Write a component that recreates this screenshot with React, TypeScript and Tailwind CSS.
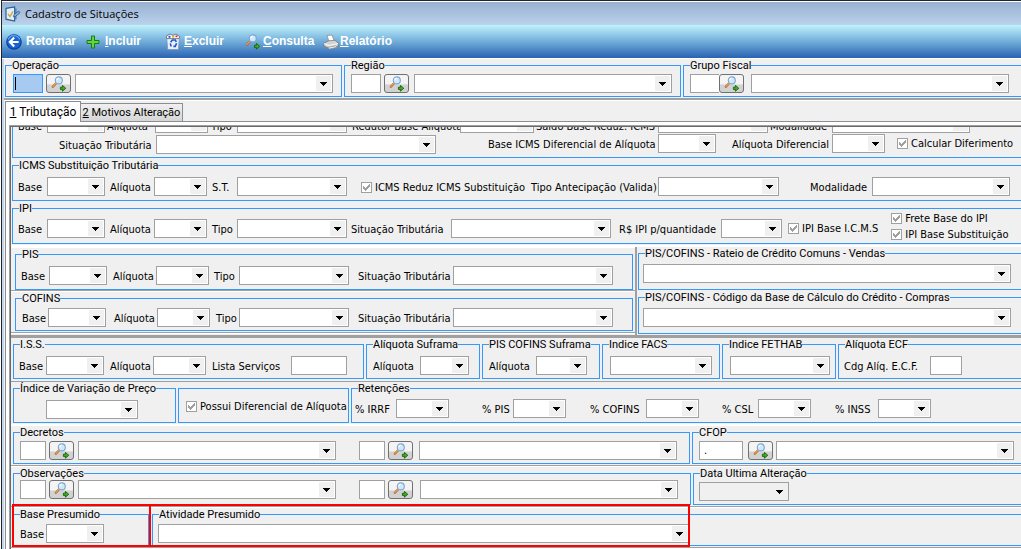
import React, { useId, useState } from 'react';

interface GroupProps {
  title?: string;
  className?: string;
  bodyClass?: string;
  children: React.ReactNode;
}

// Caixa com borda azul e título na linha superior
const Group: React.FC<GroupProps> = ({ title, className = '', bodyClass = '', children }) => (
  <fieldset className={`min-w-0 border border-[#3399ff] ${title ? '' : 'mt-[6px]'} ${className}`}>
    {title && (
      <legend className="ml-[6px] h-[13px] whitespace-nowrap font-['Roboto',sans-serif] text-[11px] leading-[13px]">
        {title}
      </legend>
    )}
    <div className={`flex items-start ${bodyClass}`}>{children}</div>
  </fieldset>
);

interface FieldProps {
  label?: string;
  name?: string;
  labelClass?: string;
  className?: string;
  boxClass?: string;
  flat?: boolean;
  value?: string;
}

const Combo: React.FC<FieldProps> = ({ label, name, labelClass = '', className = '', boxClass = '', flat }) => {
  const id = useId();
  return (
    <div className={`flex shrink-0 items-center ${className}`}>
      {label && <label htmlFor={id} className={`shrink-0 whitespace-nowrap pt-[2px] ${labelClass}`}>{label}</label>}
      <div className={`relative h-[19px] shrink-0 border border-[#a0a0a0] ${flat ? 'bg-[#f0f0f0]' : 'bg-white'} ${boxClass}`}>
        <select id={id} aria-label={label ? undefined : name} className="block h-full w-full appearance-none bg-transparent px-1 outline-none">
          <option value=""></option>
        </select>
        <span className="pointer-events-none absolute inset-y-px right-px flex w-[15px] items-center justify-center bg-[#f0f0f0]">
          <svg width="7" height="4" viewBox="0 0 7 4" shapeRendering="crispEdges">
            <path d="M0 0h7v1H0zM1 1h5v1H1zM2 2h3v1H2zM3 3h1v1H3z" fill="#000" />
          </svg>
        </span>
      </div>
    </div>
  );
};

const TextField: React.FC<FieldProps> = ({ label, name, labelClass = '', className = '', boxClass = '', value = '' }) => {
  const id = useId();
  const [text, setText] = useState(value);
  return (
    <div className={`flex shrink-0 items-center ${className}`}>
      {label && <label htmlFor={id} className={`shrink-0 whitespace-nowrap pt-[2px] ${labelClass}`}>{label}</label>}
      <input
        id={id}
        aria-label={label ? undefined : name}
        value={text}
        onChange={(e) => setText(e.target.value)}
        className={`h-[19px] border border-[#a0a0a0] bg-white px-1 outline-none ${boxClass}`}
      />
    </div>
  );
};

const Check: React.FC<{ label: string; className?: string }> = ({ label, className = '' }) => (
  <label className={`flex h-[13px] shrink-0 items-center gap-[3px] whitespace-nowrap ${className}`}>
    <span className="relative h-[11px] w-[11px]">
      <input type="checkbox" defaultChecked className="peer block h-[11px] w-[11px] appearance-none border border-[#a0a0a0] bg-white" />
      <svg className="pointer-events-none invisible absolute inset-0 peer-checked:visible" width="11" height="11" viewBox="0 0 11 11" shapeRendering="crispEdges">
        <path d="M2 4h1v3H2zM3 5h1v3H3zM4 6h1v3H4zM5 5h1v3H5zM6 4h1v3H6zM7 3h1v3H7zM8 2h1v3H8z" fill="#a0a0a0" />
      </svg>
    </span>
    {label}
  </label>
);

const SearchIcon: React.FC<{ className?: string }> = ({ className }) => (
  <svg className={className} width="16" height="16" viewBox="0 0 16 16">
    <path d="M1.8 10.8 5.4 7" stroke="#a0602c" strokeWidth="2.2" strokeLinecap="round" />
    <path d="M1.8 10.6 5.2 7" stroke="#f09a4c" strokeWidth="1.3" strokeLinecap="round" />
    <circle cx="7.8" cy="4.4" r="3.5" fill="#cdeafc" stroke="#7fa3cf" strokeWidth="1.1" />
    <path d="M5.8 4.2a2.2 2.2 0 0 1 2-2" stroke="#fff" strokeWidth="1.2" fill="none" />
    <path d="M9.4 11.2h2V9.4l3.4 2.9-3.4 2.9v-1.8h-2z" fill="#3fae1e" stroke="#14610b" strokeWidth="0.9" />
  </svg>
);

const SearchButton: React.FC<{ name: string; className?: string }> = ({ name, className = '' }) => (
  <button
    type="button"
    aria-label={name}
    className={`flex h-[19px] w-[25px] shrink-0 items-center justify-center rounded-[3px] border border-[#707070] bg-linear-to-b from-[#f4f4f4] from-50% to-[#d2d2d2] to-60% ${className}`}
  >
    <SearchIcon />
  </button>
);

// Separador cinza com realce branco
const Rule = () => <div className="h-[2px] border-t border-[#a0a0a0] bg-white" />;

const BackIcon = () => (
  <svg width="16" height="16" viewBox="0 0 16 16">
    <circle cx="8" cy="8" r="7.8" fill="#0b3f9c" />
    <circle cx="8" cy="7.6" r="6.8" fill="#1763cf" />
    <path d="M2.2 5.6a6.2 6.2 0 0 1 11.6 0" stroke="#5ea2ee" strokeWidth="1.4" fill="none" />
    <path d="M8.2 3.6 3.9 8l4.3 4.4M4.4 8h8.2" stroke="#fff" strokeWidth="2.2" fill="none" />
  </svg>
);

const PlusIcon = () => (
  <svg width="14" height="14" viewBox="0 0 14 14">
    <path d="M5.5 1h3v4.5H13v3H8.5V13h-3V8.5H1v-3h4.5z" fill="#5fd83c" stroke="#1c7a12" />
  </svg>
);

const TrashIcon = () => (
  <svg width="16" height="17" viewBox="0 0 16 17">
    <path d="M1.6 4.5h12.8l-1 12H2.8z" fill="#e9f0fa" stroke="#7f93b4" strokeWidth="0.8" />
    <path d="M1.2 3.2 5 1l3 1.4L11 1l3.8 2.6-1 2H2z" fill="#fff" stroke="#54607a" strokeWidth="0.8" />
    <path d="M3.5 2.8h2v2h-2z" fill="#2b5cc4" />
    <path d="M7 3h2.4v1.6H7z" fill="#e3b21c" />
    <path d="M10.5 2.4h2v1.8h-2z" fill="#c4372b" />
    <path d="M5.6 9.2 7.4 7h3l.8 2M11.6 10.2l-1.4 3.2H8.4M5.2 10.6l1 2.8" stroke="#1f56c8" strokeWidth="1.6" fill="none" />
  </svg>
);

const PrinterIcon = () => (
  <svg width="16" height="16" viewBox="0 0 16 16">
    <path d="M4 1.5 9 1l2.4 6.5-5 1.2z" fill="#fff" stroke="#8b8b8b" strokeWidth="0.8" />
    <path d="M1 9.4 5 7l7-.8 3.2 3-.2 3.2-9 1.8-5-2z" fill="#d4d4d4" stroke="#777" strokeWidth="0.8" />
    <path d="m1 9.6 5 2 9-2" stroke="#fafafa" fill="none" />
    <path d="m4.6 13.4 8-1.6 1.6 1.4-7.6 1.8z" fill="#f4f4f4" stroke="#888" strokeWidth="0.7" />
  </svg>
);

const WindowIcon = () => (
  <svg width="16" height="16" viewBox="0 0 16 16">
    <path d="M1 2.4 9.6 1v14L1 13.2z" fill="#dff0fc" stroke="#2d5e94" strokeWidth="1.2" />
    <path d="M9.6 2.4h2v11h-2z" fill="#4d86bf" />
    <path d="m3 8 2 2.6 3-5.2" stroke="#d8a13a" strokeWidth="1.4" fill="none" />
    <path d="M9 8.6 13.6 5l1.4 1.7-4.6 3.7-2 .4z" fill="#7ab2e4" stroke="#2c5582" strokeWidth="0.8" />
  </svg>
);

interface ToolProps {
  icon: React.ReactNode;
  accessKey?: string;
  text: string;
  className?: string;
}

const Tool: React.FC<ToolProps> = ({ icon, accessKey, text, className = '' }) => (
  <button type="button" accessKey={accessKey} className={`flex items-center text-left font-['Liberation_Sans',sans-serif] text-[12px] font-bold text-white ${className}`}>
    {icon}
    <span>{accessKey && <u>{accessKey}</u>}{text}</span>
  </button>
);

const LookupPair: React.FC<{ name: string; second?: string }> = ({ name, second = 'ml-[6px]' }) => (
  <>
    <TextField name={`${name} 1`} boxClass="w-[26px]" />
    <SearchButton name={`Pesquisar ${name} 1`} className="ml-[3px]" />
    <Combo name={`Lista de ${name} 1`} className="ml-1" boxClass="w-[258px]" />
    <TextField name={`${name} 2`} className="ml-[23px]" boxClass="w-[26px]" />
    <SearchButton name={`Pesquisar ${name} 2`} className="ml-[3px]" />
    <Combo name={`Lista de ${name} 2`} className={second} boxClass="w-[258px]" />
  </>
);

const App: React.FC = () => {
  const [tab, setTab] = useState(1);

  return (
    <div className="overflow-hidden border-l border-white bg-[#f0f0f0] font-['DejaVu_Sans_Condensed','DejaVu_Sans',sans-serif] text-[11px] leading-[13px] text-black">
      <div className="border-l border-t border-[#22242c]">
        {/* TÍTULO */}
        <header className="flex h-6 items-center gap-1 border-t border-white bg-linear-to-b from-[#98b1d0] to-[#bbd2ec] pl-[3px]">
          <WindowIcon />
          <h1 className="font-['Open_Sans',sans-serif] text-[11px] leading-[16px]">Cadastro de Situações</h1>
        </header>

        {/* BARRA DE FERRAMENTAS */}
        <div className="flex h-[34px] items-center border-b border-white bg-linear-to-b from-[#bff3fd] via-[#72add9] to-[#2a62b2] pl-1">
          <Tool icon={<BackIcon />} text="Retornar" className="w-[80px] gap-1" />
          <Tool icon={<PlusIcon />} accessKey="I" text="ncluir" className="w-[79px] gap-[5px]" />
          <Tool icon={<TrashIcon />} accessKey="E" text="xcluir" className="w-[80px] gap-[3px]" />
          <Tool icon={<SearchIcon />} accessKey="C" text="onsulta" className="w-[78px] gap-[2px]" />
          <Tool icon={<PrinterIcon />} accessKey="R" text="elatório" className="gap-px" />
        </div>

        <main className="border-l-2 border-[#c3d5ea]">
          {/* CHAVE DO CADASTRO */}
          <div className="grid grid-cols-[337fr_337fr_338fr] gap-[2px] pb-px pl-px">
            <Group title="Operação" bodyClass="pb-[3px] pl-[7px] pt-[2px]">
              <div className="relative">
                <TextField name="Operação" boxClass="w-[30px] border-[#3399ff]! bg-[#a6caf0]!" />
                <span className="pointer-events-none absolute left-[2px] top-[3px] h-[13px] w-px bg-black" />
              </div>
              <SearchButton name="Pesquisar operação" className="ml-[3px]" />
              <Combo name="Lista de operações" className="ml-1" boxClass="w-[258px]" />
            </Group>
            <Group title="Região" bodyClass="pb-[3px] pl-[6px] pt-[2px]">
              <TextField name="Região" boxClass="w-[30px]" />
              <SearchButton name="Pesquisar região" className="ml-[3px]" />
              <Combo name="Lista de regiões" className="ml-[5px]" boxClass="w-[258px]" />
            </Group>
            <Group title="Grupo Fiscal" className="border-r-0" bodyClass="pb-[3px] pl-[6px] pt-[2px]">
              <TextField name="Grupo Fiscal" boxClass="w-[29px] border-r-0" />
              <SearchButton name="Pesquisar grupo fiscal" />
              <Combo name="Lista de grupos fiscais" className="ml-[7px]" boxClass="w-[258px]" />
            </Group>
          </div>
          <div className="h-[3px] border-t-2 border-[#a0a0a0] bg-white" />

          {/* ABAS */}
          <div role="tablist" className="flex items-end pl-px font-['Roboto',sans-serif]">
            <button role="tab" aria-selected={tab === 1} onClick={() => setTab(1)} className="h-[21px] w-[76px] border-l border-r border-t border-[#8c8e94] bg-white text-[12px]">
              <u>1</u> Tributação
            </button>
            <button role="tab" aria-selected={tab === 2} onClick={() => setTab(2)} className="h-[19px] w-[102px] whitespace-nowrap border border-l-0 border-[#8c8e94] bg-linear-to-b from-[#f0f0f0] to-[#d6d6d6] text-[11px]">
              <u>2</u> Motivos Alteração
            </button>
            <span className="flex-1 border-b border-[#8c8e94]" />
          </div>

          <div className="ml-px border-l border-[#8c8e94] bg-white pl-[3px] pt-[3px]">
            <div className="border-l border-t border-[#a0a0a0]">
              <div className="border-l border-t border-[#696969] bg-[#f0f0f0]">
                {/* Grupo ICMS, rolado até a última linha */}
                <div className="ml-px flex h-[31px] flex-col justify-end overflow-hidden">
                  <Group className="shrink-0 border-r-0" bodyClass="flex-col pb-[3px]">
                    <div className="flex pl-[5px]">
                      <Combo label="Base" labelClass="w-[29px] self-end" boxClass="w-[58px]" />
                      <Combo label="Alíquota" className="ml-[2px]" labelClass="w-[48px] self-end" boxClass="w-[53px]" />
                      <Combo label="Tipo" className="ml-[3px]" labelClass="w-[26px] self-end" boxClass="w-[110px]" />
                      <Combo label="Redutor Base Aliquota" className="ml-[5px]" labelClass="w-[108px] self-end" boxClass="w-[74px]" />
                      <Combo label="Saldo Base Reduz. ICMS" className="ml-[2px]" labelClass="w-[122px] self-end" boxClass="w-[110px]" />
                      <Combo label="Modalidade" className="ml-[2px]" labelClass="w-[62px] self-end" boxClass="w-[138px]" />
                    </div>
                    <div className="mt-px flex items-start pl-[46px]">
                      <Combo label="Situação Tributária" className="mt-px" labelClass="w-[97px]" boxClass="w-[280px]" />
                      <Combo label="Base ICMS Diferencial de Alíquota" className="ml-[52px]" labelClass="w-[170px]" boxClass="w-[58px]" />
                      <Combo label="Alíquota Diferencial" className="ml-[16px]" labelClass="w-[100px]" boxClass="w-[53px]" />
                      <Check label="Calcular Diferimento" className="ml-3 mt-[3px]" />
                    </div>
                  </Group>
                </div>

                <Group title="ICMS Substituição Tributária" className="ml-px mt-px border-r-0" bodyClass="pb-1 pl-[5px] pt-[5px]">
                  <Combo label="Base" labelClass="w-[29px]" boxClass="w-[58px]" />
                  <Combo label="Alíquota" className="ml-[5px]" labelClass="w-[44px]" boxClass="w-[53px]" />
                  <Combo label="S.T." className="ml-[5px]" labelClass="w-[25px]" boxClass="w-[110px]" />
                  <Check label="ICMS Reduz ICMS Substituição" className="ml-[14px] mt-1" />
                  <Combo label="Tipo Antecipação (Valida)" className="ml-[6px]" labelClass="w-[127px]" boxClass="w-[121px]" />
                  <Combo label="Modalidade" className="ml-[31px]" labelClass="w-[62px]" boxClass="w-[138px]" />
                </Group>

                <Group title="IPI" className="ml-px mt-px border-r-0" bodyClass="pl-[5px]">
                  <div className="flex pb-[5px] pt-1">
                    <Combo label="Base" labelClass="w-[29px]" boxClass="w-[58px]" />
                    <Combo label="Alíquota" className="ml-[5px]" labelClass="w-[44px]" boxClass="w-[53px]" />
                    <Combo label="Tipo" className="ml-[5px]" labelClass="w-[25px]" boxClass="w-[110px]" />
                    <Combo label="Situação Tributária" className="ml-1" labelClass="w-[100px]" boxClass="w-[160px]" />
                    <Combo label="R$ IPI p/quantidade" className="ml-2" labelClass="w-[102px]" boxClass="w-[61px]" />
                    <Check label="IPI Base I.C.M.S" className="ml-[6px] mt-[3px]" />
                  </div>
                  <div className="ml-[13px] flex h-0 flex-col gap-[3px]">
                    <Check label="Frete Base do IPI" className="-mt-[3px]" />
                    <Check label="IPI Base Substituição" />
                  </div>
                </Group>

                {/* PIS / COFINS */}
                <div className="mt-px border-t-2 border-white">
                  <div className="flex border-b-[3px] border-[#a0a0a0]">
                    <div className="w-[626px] border-r-2 border-[#a0a0a0]">
                      <div className="border-t border-white pl-1 pr-[2px]">
                        <Group title="PIS" bodyClass="pb-1 pl-[5px] pt-[5px]">
                          <Combo label="Base" labelClass="w-[28px]" boxClass="w-[58px]" />
                          <Combo label="Alíquota" className="ml-[6px]" labelClass="w-[43px]" boxClass="w-[53px]" />
                          <Combo label="Tipo" className="ml-[5px]" labelClass="w-[25px]" boxClass="w-[110px]" />
                          <Combo label="Situação Tributária" className="ml-[9px]" labelClass="w-[95px]" boxClass="w-[160px]" />
                        </Group>
                      </div>
                      <Rule />
                      <div className="pb-px pl-1 pr-[2px]">
                        <Group title="COFINS" bodyClass="pb-[3px] pl-[6px] pt-[3px]">
                          <Combo label="Base" labelClass="w-[26px]" boxClass="w-[58px]" />
                          <Combo label="Alíquota" className="ml-2" labelClass="w-[43px]" boxClass="w-[53px]" />
                          <Combo label="Tipo" className="ml-[6px]" labelClass="w-[23px]" boxClass="w-[110px]" />
                          <Combo label="Situação Tributária" className="ml-[9px]" labelClass="w-[95px]" boxClass="w-[160px]" />
                        </Group>
                      </div>
                      <Rule />
                    </div>
                    <div className="flex flex-1 flex-col gap-px pb-px pl-px">
                      <Group title="PIS/COFINS - Rateio de Crédito Comuns - Vendas" className="border-r-0" bodyClass="pb-[6px] pl-1 pt-1">
                        <Combo name="Rateio de Crédito Comuns - Vendas" className="w-full pr-[10px]" boxClass="flex-1" />
                      </Group>
                      <Group title="PIS/COFINS - Código da Base de Cálculo do Crédito - Compras" className="border-r-0" bodyClass="pb-[6px] pl-1 pt-1">
                        <Combo name="Código da Base de Cálculo do Crédito - Compras" className="w-full pr-[10px]" boxClass="flex-1" />
                      </Group>
                    </div>
                  </div>
                </div>

                {/* ISS, Suframa e índices */}
                <div className="flex gap-[2px] pb-[2px] pl-[2px]">
                  <Group title="I.S.S." className="w-[351px]" bodyClass="pb-[3px] pl-[5px] pt-[5px]">
                    <Combo label="Base" labelClass="w-[27px]" boxClass="w-[58px]" />
                    <Combo label="Alíquota" className="ml-[6px]" labelClass="w-[43px]" boxClass="w-[53px]" />
                    <TextField label="Lista Serviços" className="ml-[6px]" labelClass="w-[79px]" boxClass="w-[56px]" />
                  </Group>
                  <Group title="Alíquota Suframa" className="w-[114px]" bodyClass="pb-[3px] pl-[6px] pt-[5px]">
                    <Combo label="Alíquota" labelClass="w-[47px]" boxClass="w-[49px]" />
                  </Group>
                  <Group title="PIS COFINS Suframa" className="w-[118px]" bodyClass="pb-[3px] pl-[6px] pt-[5px]">
                    <Combo label="Alíquota" labelClass="w-[47px]" boxClass="w-[51px]" />
                  </Group>
                  <Group title="Indice FACS" className="w-[118px]" bodyClass="pb-[3px] pl-[7px] pt-[5px]">
                    <Combo name="Indice FACS" boxClass="w-[102px]" />
                  </Group>
                  <Group title="Indice FETHAB" className="w-[114px]" bodyClass="pb-[3px] pl-[7px] pt-[5px]">
                    <Combo name="Indice FETHAB" boxClass="w-[100px]" />
                  </Group>
                  <Group title="Alíquota ECF" className="flex-1 border-r-0" bodyClass="pb-[3px] pl-[5px] pt-[5px]">
                    <TextField label="Cdg Alíq. E.C.F." labelClass="w-[86px]" boxClass="w-[32px]" />
                  </Group>
                </div>
                <div className="h-px bg-[#a0a0a0]" />

                {/* Variação de preço e retenções */}
                <div className="flex gap-[2px] pb-px pl-[2px]">
                  <Group title="Índice de Variação de Preço" className="w-[163px]" bodyClass="pb-[3px] pl-8 pt-[5px]">
                    <Combo name="Índice de Variação de Preço" boxClass="w-[92px]" />
                  </Group>
                  <Group className="w-[171px]" bodyClass="pl-[7px] pt-[11px]">
                    <Check label="Possui Diferencial de Alíquota" />
                  </Group>
                  <Group title="Retenções" className="flex-1 border-r-0" bodyClass="pb-1 pl-[3px] pt-1">
                    <Combo label="% IRRF" labelClass="w-[41px]" boxClass="w-[53px]" />
                    <Combo label="% PIS" className="ml-[33px]" labelClass="w-[31px]" boxClass="w-[53px]" />
                    <Combo label="% COFINS" className="ml-[24px]" labelClass="w-[56px]" boxClass="w-[53px]" />
                    <Combo label="% CSL" className="ml-[23px]" labelClass="w-[36px]" boxClass="w-[53px]" />
                    <Combo label="% INSS" className="ml-[24px]" labelClass="w-[43px]" boxClass="w-[53px]" />
                  </Group>
                </div>
                <div className="h-[2px] bg-white" />

                <div className="flex gap-[2px] pb-px pl-[2px]">
                  <Group title="Decretos" className="w-[677px]" bodyClass="pb-[3px] pl-[6px] pt-[2px]">
                    <LookupPair name="Decreto" />
                  </Group>
                  <Group title="CFOP" className="flex-1 border-r-0" bodyClass="pb-[3px] pl-[6px] pt-[2px]">
                    <TextField name="CFOP" value="." boxClass="w-[44px]" />
                    <SearchButton name="Pesquisar CFOP" className="ml-[5px]" />
                    <Combo name="Lista de CFOP" className="ml-[3px] mr-[7px] flex-1" boxClass="flex-1" />
                  </Group>
                </div>
                <Rule />

                <div className="flex gap-[2px] pb-px pl-[2px]">
                  <Group title="Observações" className="w-[678px]" bodyClass="pb-[5px] pl-[6px]">
                    <LookupPair name="Observação" second="ml-[7px]" />
                  </Group>
                  <Group title="Data Ultima Alteração" className="flex-1 border-r-0" bodyClass="pb-[3px] pl-[5px] pt-[2px]">
                    <Combo name="Data Ultima Alteração" flat boxClass="w-[90px]" />
                  </Group>
                </div>
                <Rule />

                {/* Lucro presumido, com os dois campos destacados em vermelho */}
                <div className="relative flex gap-[3px] pb-px pl-[2px]">
                  <Group title="Base Presumido" className="w-[136px]" bodyClass="pb-[2px] pl-[6px] pt-[3px]">
                    <Combo label="Base" labelClass="w-[26px]" boxClass="w-[58px]" />
                  </Group>
                  <Group title="Atividade Presumido" className="flex-1 border-r-0" bodyClass="pb-[2px] pl-[5px] pt-[3px]">
                    <Combo name="Atividade Presumido" boxClass="w-[531px]" />
                  </Group>
                  <span className="pointer-events-none absolute -top-1 bottom-0 left-px w-[139px] border-2 border-[#ff0000]" />
                  <span className="pointer-events-none absolute -top-1 bottom-0 left-[138px] w-[541px] border-2 border-[#ff0000]" />
                </div>
                <Rule />
              </div>
            </div>
          </div>
        </main>
      </div>
    </div>
  );
};

export default App;
